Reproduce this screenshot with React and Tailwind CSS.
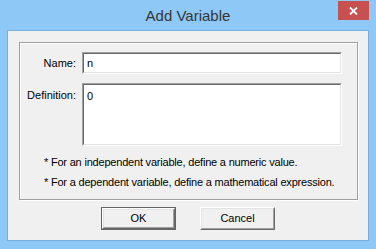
export default function App() {
  const font = { fontFamily: '"Liberation Sans", Arial, sans-serif' };
  return (
    <div className="w-[376px] h-[249px] bg-[#8dc8f6] flex flex-col overflow-hidden" style={font}>
      <div className="relative h-[30px] shrink-0 flex items-center justify-center">
        <span className="text-[15px] text-[#363636] leading-none">Add Variable</span>
        <div className="absolute left-[338px] top-[1px] w-[31px] h-[19px] bg-[#c75050] flex items-center justify-center">
          <svg width="9" height="8" viewBox="0 0 9 8">
            <path d="M1 0.5 L8 7.5 M8 0.5 L1 7.5" stroke="#fff" strokeWidth="1.8" />
          </svg>
        </div>
      </div>
      <div className="ml-[7px] w-[362px] h-[211px] border border-[#79addb] bg-[#f0f0f0] flex flex-col">
        <div className="ml-[11px] mt-[11px] w-[339px] h-[158px] border border-[#a0a0a0] shadow-[inset_1px_1px_0_#ffffff,1px_1px_0_#ffffff] flex flex-col pt-[9px]">
          <div className="grid grid-cols-[56px_260px] gap-x-[6px] gap-y-[9px] text-[11px] text-black">
            <div className="text-right self-center">Name:</div>
            <div className="h-[22px] border border-t-[#a0a0a0] border-l-[#a0a0a0] border-b-white border-r-white">
              <div className="h-full border border-t-[#696969] border-l-[#696969] border-b-[#e3e3e3] border-r-[#e3e3e3] bg-white pl-[3px] flex items-center">n</div>
            </div>
            <div className="text-right pt-[4px]">Definition:</div>
            <div className="h-[63px] border border-t-[#a0a0a0] border-l-[#a0a0a0] border-b-white border-r-white">
              <div className="h-full border border-t-[#696969] border-l-[#696969] border-b-[#e3e3e3] border-r-[#e3e3e3] bg-white pl-[3px] pt-[3px]">0</div>
            </div>
          </div>
          <div className="mt-[6px] pl-[24px] text-[11px] leading-[20px] tracking-[-0.2px] text-black">
            <div>* For an independent variable, define a numeric value.</div>
            <div>* For a dependent variable, define a mathematical expression.</div>
          </div>
        </div>
        <div className="mt-[7px] flex justify-center gap-[24px] text-[11px] text-black">
          <div className="w-[75px] h-[23px] border border-[#646464]">
            <div className="h-full border border-t-white border-l-white border-b-[#696969] border-r-[#696969]">
              <div className="h-full border border-t-[#e3e3e3] border-l-[#e3e3e3] border-b-[#a0a0a0] border-r-[#a0a0a0] bg-[#f0f0f0] flex items-center justify-center">OK</div>
            </div>
          </div>
          <div className="w-[75px] h-[23px] border border-t-white border-l-white border-b-[#696969] border-r-[#696969]">
            <div className="h-full border border-t-[#e3e3e3] border-l-[#e3e3e3] border-b-[#a0a0a0] border-r-[#a0a0a0] bg-[#f0f0f0] flex items-center justify-center">Cancel</div>
          </div>
        </div>
      </div>
    </div>
  );
}
